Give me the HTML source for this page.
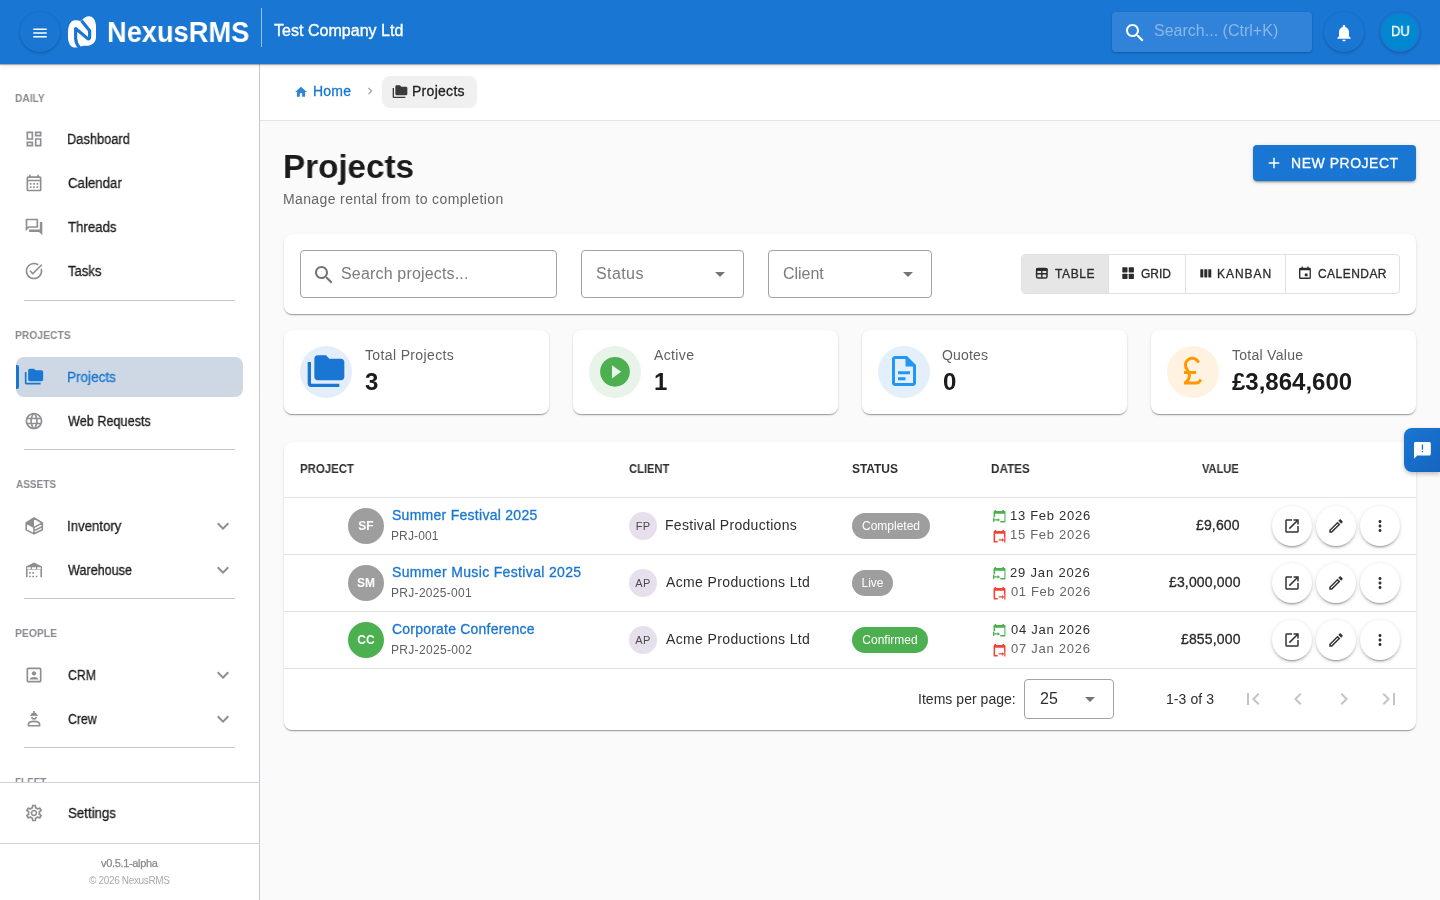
<!DOCTYPE html>
<html><head><meta charset="utf-8"><style>
*{box-sizing:border-box;margin:0;padding:0}
html,body{width:1440px;height:900px;overflow:hidden;background:#fafafa;font-family:"Liberation Sans",sans-serif;color:#1f1f1f}
.abs{position:absolute}
.t{position:absolute;line-height:1;white-space:nowrap;will-change:transform}
svg{display:block}
.card{position:absolute;background:#fff;border-radius:8px;box-shadow:0 2px 1px -1px rgba(0,0,0,.2),0 1px 1px 0 rgba(0,0,0,.14),0 1px 3px 0 rgba(0,0,0,.12)}
</style></head>
<body>
<div class="abs" style="left:0;top:0;width:1440px;height:64px;background:#1976d2;box-shadow:0 1px 1px rgba(0,0,0,.28),0 2px 4px rgba(0,0,0,.08);z-index:5">
<div class="abs" style="left:20px;top:12px;width:40px;height:40px;border-radius:50%;background:#1976d2;box-shadow:0 1px 3px rgba(0,0,0,.25)"></div>
<svg class="abs" style="left:31px;top:23.5px;fill:#fff;color:#fff;" width="18" height="18" viewBox="0 0 24 24"><path d="M3 18h18v-2H3v2zm0-5h18v-2H3v2zm0-7v2h18V6H3z"/></svg>
<svg class="abs" style="left:64px;top:12px" width="40" height="40" viewBox="0 0 900 900">
    <path fill="#fff" d="M90,470 C90,280 160,185 250,185 C320,185 360,215 400,190 C450,120 500,95 560,95 C660,95 720,200 720,330 L720,560 C720,690 620,760 500,760 C440,760 400,770 350,780 C320,795 290,800 260,800 C150,800 90,700 90,560 Z"/>
    <path fill="none" stroke="#1976d2" stroke-width="72" stroke-linejoin="round" d="M345,800 Q265,700 262,590 L262,372 L540,605 Q575,600 577,560 L577,420 L395,195"/>
    </svg>
<div class="t" id="k0" style="left:106.55px;top:16.61px;font-size:30px;color:#fff;font-weight:700;transform:scaleX(0.9079);transform-origin:0 0;">NexusRMS</div>
<div class="abs" style="left:260.5px;top:8px;width:1.5px;height:39px;background:rgba(255,255,255,.55)"></div>
<div class="t" id="k1" style="left:274.20px;top:23.46px;font-size:16px;color:#fff;letter-spacing:0.028px;-webkit-text-stroke:0.35px #fff;">Test Company Ltd</div>
<div class="abs" style="left:1112px;top:12px;width:200px;height:40px;border-radius:4px;background:#3083d8;box-shadow:0 1px 2px rgba(0,0,0,.25)"></div>
<svg class="abs" style="left:1123px;top:21px;fill:#fff;color:#fff;" width="24" height="24" viewBox="0 0 24 24"><path d="M15.5 14h-.79l-.28-.27C15.41 12.59 16 11.11 16 9.5 16 5.91 13.09 3 9.5 3S3 5.91 3 9.5 5.91 16 9.5 16c1.61 0 3.09-.59 4.23-1.57l.27.28v.79l5 4.99L20.49 19l-4.99-5zm-6 0C7.01 14 5 11.99 5 9.5S7.01 5 9.5 5 14 7.01 14 9.5 11.99 14 9.5 14z"/></svg>
<div class="t" id="k2" style="left:1153.50px;top:23.46px;font-size:16px;color:#8ab8e8;letter-spacing:0.011px;">Search... (Ctrl+K)</div>
<div class="abs" style="left:1324px;top:12px;width:40px;height:40px;border-radius:50%;background:#1976d2;box-shadow:0 1px 3px rgba(0,0,0,.25)"></div>
<svg class="abs" style="left:1333.7px;top:23.1px;fill:#fff;color:#fff;" width="20" height="20" viewBox="0 0 24 24"><path d="M12 22c1.1 0 2-.9 2-2h-4c0 1.1.89 2 2 2zm6-6v-5c0-3.07-1.64-5.64-4.5-6.32V4c0-.83-.67-1.5-1.5-1.5s-1.5.67-1.5 1.5v.68C7.63 5.36 6 7.92 6 11v5l-2 2v1h16v-1l-2-2z"/></svg>
<div class="abs" style="left:1380px;top:12px;width:40px;height:40px;border-radius:50%;background:#1976d2;box-shadow:0 1px 3px rgba(0,0,0,.25)"></div>
<div class="abs" style="left:1382px;top:14px;width:36px;height:36px;border-radius:50%;background:#0288d1"></div>
<div class="t" id="k3" style="left:1390.50px;top:24.15px;font-size:14px;color:#fff;transform:scaleX(0.9320);transform-origin:0 0;-webkit-text-stroke:0.3px #fff;">DU</div>
</div>
<div class="abs" style="left:0px;top:64px;width:260px;height:836px;background:#fff;border-right:1px solid #cac4d0;z-index:2;overflow:hidden"></div>
<div class="abs" style="left:0;top:0;width:259px;height:900px;z-index:3;overflow:hidden">
<div class="t" id="k4" style="left:15.28px;top:92.69px;font-size:11px;color:#8b8a90;font-weight:700;transform:scaleX(0.9223);transform-origin:0 0;">DAILY</div>
<svg class="abs" style="left:24px;top:129px;fill:#8e8e93;color:#8e8e93;" width="20" height="20" viewBox="0 0 24 24"><path d="M19 5v2h-4V5h4M9 5v6H5V5h4m10 8v6h-4v-6h4M9 17v2H5v-2h4M21 3h-8v6h8V3zM11 3H3v10h8V3zm10 8h-8v10h8V11zm-10 4H3v6h8v-6z"/></svg>
<div class="t" id="k5" style="left:67.35px;top:132.15px;font-size:14px;color:#1c1c1c;transform:scaleX(0.9173);transform-origin:0 0;-webkit-text-stroke:0.3px #1c1c1c;">Dashboard</div>
<svg class="abs" style="left:24px;top:173px;fill:#8e8e93;color:#8e8e93;" width="20" height="20" viewBox="0 0 24 24"><path d="M19 4h-1V2h-2v2H8V2H6v2H5c-1.11 0-1.99.9-1.99 2L3 20c0 1.1.89 2 2 2h14c1.1 0 2-.9 2-2V6c0-1.1-.9-2-2-2zm0 16H5V10h14v10zm0-12H5V6h14v2zM9 14H7v-2h2v2zm4 0h-2v-2h2v2zm4 0h-2v-2h2v2zm-8 4H7v-2h2v2zm4 0h-2v-2h2v2zm4 0h-2v-2h2v2z"/></svg>
<div class="t" id="k6" style="left:68.35px;top:176.15px;font-size:14px;color:#1c1c1c;transform:scaleX(0.9473);transform-origin:0 0;-webkit-text-stroke:0.3px #1c1c1c;">Calendar</div>
<svg class="abs" style="left:24px;top:217px;fill:#8e8e93;color:#8e8e93;" width="20" height="20" viewBox="0 0 24 24"><path d="M15 4v7H5.17L4 12.17V4h11m1-2H3c-.55 0-1 .45-1 1v14l4-4h10c.55 0 1-.45 1-1V3c0-.55-.45-1-1-1zm5 4h-2v9H6v2c0 .55.45 1 1 1h11l4 4V7c0-.55-.45-1-1-1z"/></svg>
<div class="t" id="k7" style="left:68.35px;top:220.15px;font-size:14px;color:#1c1c1c;transform:scaleX(0.9460);transform-origin:0 0;-webkit-text-stroke:0.3px #1c1c1c;">Threads</div>
<svg class="abs" style="left:24px;top:261px;fill:#8e8e93;color:#8e8e93;" width="20" height="20" viewBox="0 0 24 24"><path d="M22 5.18L10.59 16.6l-4.24-4.24 1.41-1.41 2.83 2.83 10-10L22 5.18zm-2.21 5.04c.13.57.21 1.17.21 1.78 0 4.42-3.58 8-8 8s-8-3.58-8-8 3.58-8 8-8c1.58 0 3.04.46 4.28 1.25l1.44-1.44C16.1 2.67 14.13 2 12 2 6.48 2 2 6.48 2 12s4.48 10 10 10 10-4.48 10-10c0-1.19-.22-2.33-.6-3.39l-1.61 1.61z"/></svg>
<div class="t" id="k8" style="left:68.35px;top:264.15px;font-size:14px;color:#1c1c1c;transform:scaleX(0.9355);transform-origin:0 0;-webkit-text-stroke:0.3px #1c1c1c;">Tasks</div>
<div class="abs" style="left:24px;top:300px;width:211px;height:1px;background:#c4c4c4"></div>
<div class="t" id="k9" style="left:15.28px;top:330.09px;font-size:11px;color:#8b8a90;font-weight:700;transform:scaleX(0.9389);transform-origin:0 0;">PROJECTS</div>
<div class="abs" style="left:16px;top:357px;width:227px;height:40px;border-radius:8px;background:#cdd8e4"></div>
<div class="abs" style="left:16px;top:365px;width:3px;height:24px;border-radius:0 2px 2px 0;background:#1976d2"></div>
<svg class="abs" style="left:24px;top:366.5px;fill:#1976d2;color:#1976d2;" width="20" height="20" viewBox="0 0 24 24"><path d="M3 6H1v13c0 1.1.9 2 2 2h17v-2H3V6z"/><path d="M21 4h-7l-2-2H7c-1.1 0-1.99.9-1.99 2L5 15c0 1.1.9 2 2 2h14c1.1 0 2-.9 2-2V6c0-1.1-.9-2-2-2z"/></svg>
<div class="t" id="k10" style="left:67.35px;top:369.65px;font-size:14px;color:#1976d2;transform:scaleX(0.9667);transform-origin:0 0;-webkit-text-stroke:0.3px #1976d2;">Projects</div>
<svg class="abs" style="left:24px;top:410.5px;fill:#8e8e93;color:#8e8e93;" width="20" height="20" viewBox="0 0 24 24"><path d="M11.99 2C6.47 2 2 6.48 2 12s4.47 10 9.99 10C17.52 22 22 17.52 22 12S17.52 2 11.99 2zm6.93 6h-2.95c-.32-1.25-.78-2.45-1.38-3.56 1.84.63 3.37 1.91 4.33 3.56zM12 4.04c.83 1.2 1.48 2.53 1.91 3.96h-3.82c.43-1.43 1.08-2.76 1.91-3.96zM4.26 14C4.1 13.36 4 12.69 4 12s.1-1.36.26-2h3.38c-.08.66-.14 1.32-.14 2 0 .68.06 1.34.14 2H4.26zm.82 2h2.95c.32 1.25.78 2.45 1.38 3.56-1.84-.63-3.37-1.9-4.33-3.56zm2.95-8H5.08c.96-1.66 2.49-2.93 4.33-3.56C8.81 5.55 8.35 6.75 8.03 8zM12 19.96c-.83-1.2-1.48-2.53-1.91-3.96h3.82c-.43 1.43-1.08 2.76-1.91 3.96zM14.34 14H9.66c-.09-.66-.16-1.32-.16-2 0-.68.07-1.35.16-2h4.68c.09.65.16 1.32.16 2 0 .68-.07 1.34-.16 2zm.25 5.56c.6-1.11 1.06-2.31 1.38-3.56h2.95c-.96 1.65-2.49 2.93-4.33 3.56zM16.36 14c.08-.66.14-1.32.14-2 0-.68-.06-1.34-.14-2h3.38c.16.64.26 1.31.26 2s-.1 1.36-.26 2h-3.38z"/></svg>
<div class="t" id="k11" style="left:68.44px;top:413.65px;font-size:14px;color:#1c1c1c;transform:scaleX(0.9042);transform-origin:0 0;-webkit-text-stroke:0.3px #1c1c1c;">Web Requests</div>
<div class="abs" style="left:24px;top:449px;width:211px;height:1px;background:#c4c4c4"></div>
<div class="t" id="k12" style="left:16.10px;top:478.69px;font-size:11px;color:#8b8a90;font-weight:700;transform:scaleX(0.9091);transform-origin:0 0;">ASSETS</div>
<svg class="abs" style="left:24px;top:515.5px;fill:#8e8e93;color:#8e8e93;" width="20" height="20" viewBox="0 0 24 24"><path fill="none" stroke="currentColor" stroke-width="1.9" stroke-linejoin="round" d="M12 2.4L22 8.4V16.6L12 21.4L2.6 16.6V8.4Z M2.8 8.6L12 13.6L21.8 8.6 M12 13.6V21.2 M13.2 17.2L21.6 12.8"/><path d="M12 2.2L2.6 8.4L12 13.6Z"/></svg>
<div class="t" id="k13" style="left:67.35px;top:518.65px;font-size:14px;color:#1c1c1c;transform:scaleX(0.9421);transform-origin:0 0;-webkit-text-stroke:0.3px #1c1c1c;">Inventory</div>
<svg class="abs" style="left:211px;top:513.5px;fill:#8e8e93;color:#8e8e93;" width="24" height="24" viewBox="0 0 24 24"><path d="M16.59 8.59L12 13.17 7.41 8.59 6 10l6 6 6-6z"/></svg>
<svg class="abs" style="left:24px;top:559.5px;fill:#8e8e93;color:#8e8e93;" width="20" height="20" viewBox="0 0 24 24"><path fill-rule="evenodd" d="M2.4 7.8L12 3L21.6 7.8V11.6H2.4Z M3.9 8.8h4.3v2.2H3.9z M9.7 8.8h4.6v2.2H9.7z M15.8 8.8h4.3v2.2h-4.3z"/><path d="M2.4 11h1.9v9.8H2.4z M19.7 11h1.9v9.8h-1.9z M6.2 14.5h2v2h-2z M10 14.5h2v2h-2z M6.2 18.8h2v2h-2z M10 18.8h2v2h-2z M14.2 18.8h1.8v2h-1.8z"/></svg>
<div class="t" id="k14" style="left:68.44px;top:562.65px;font-size:14px;color:#1c1c1c;transform:scaleX(0.8995);transform-origin:0 0;-webkit-text-stroke:0.3px #1c1c1c;">Warehouse</div>
<svg class="abs" style="left:211px;top:557.5px;fill:#8e8e93;color:#8e8e93;" width="24" height="24" viewBox="0 0 24 24"><path d="M16.59 8.59L12 13.17 7.41 8.59 6 10l6 6 6-6z"/></svg>
<div class="abs" style="left:24px;top:598px;width:211px;height:1px;background:#c4c4c4"></div>
<div class="t" id="k15" style="left:15.28px;top:628.19px;font-size:11px;color:#8b8a90;font-weight:700;transform:scaleX(0.9413);transform-origin:0 0;">PEOPLE</div>
<svg class="abs" style="left:24px;top:664.5px;fill:#8e8e93;color:#8e8e93;" width="20" height="20" viewBox="0 0 24 24"><path d="M19 5v14H5V5h14m0-2H5c-1.11 0-2 .9-2 2v14c0 1.1.89 2 2 2h14c1.1 0 2-.9 2-2V5c0-1.1-.9-2-2-2z"/><circle cx="12" cy="10" r="2.6"/><path d="M6.5 17.5c.6-2 3-3 5.5-3s4.9 1 5.5 3z"/></svg>
<div class="t" id="k16" style="left:68.35px;top:667.65px;font-size:14px;color:#1c1c1c;transform:scaleX(0.8798);transform-origin:0 0;-webkit-text-stroke:0.3px #1c1c1c;">CRM</div>
<svg class="abs" style="left:211px;top:662.5px;fill:#8e8e93;color:#8e8e93;" width="24" height="24" viewBox="0 0 24 24"><path d="M16.59 8.59L12 13.17 7.41 8.59 6 10l6 6 6-6z"/></svg>
<svg class="abs" style="left:24px;top:708.5px;fill:#8e8e93;color:#8e8e93;" width="20" height="20" viewBox="0 0 24 24"><path d="M11 2.3h2v2.3c1.8.4 2.9 1.6 2.9 3.1H8.1c0-1.5 1.1-2.7 2.9-3.1z"/><rect x="7.2" y="6.8" width="9.6" height="1.4" rx=".5"/><path fill="none" stroke="currentColor" stroke-width="1.8" d="M9.4 9.3a2.6 2.6 0 0 0 5.2 0"/><path fill="none" stroke="currentColor" stroke-width="2" stroke-linejoin="round" d="M5.3 20.1v-1.4c0-2.6 3.4-3.9 6.7-3.9s6.7 1.3 6.7 3.9v1.4z"/></svg>
<div class="t" id="k17" style="left:68.35px;top:711.65px;font-size:14px;color:#1c1c1c;transform:scaleX(0.8804);transform-origin:0 0;-webkit-text-stroke:0.3px #1c1c1c;">Crew</div>
<svg class="abs" style="left:211px;top:706.5px;fill:#8e8e93;color:#8e8e93;" width="24" height="24" viewBox="0 0 24 24"><path d="M16.59 8.59L12 13.17 7.41 8.59 6 10l6 6 6-6z"/></svg>
<div class="abs" style="left:24px;top:747px;width:211px;height:1px;background:#c4c4c4"></div>
<div class="t" id="k18" style="left:15.28px;top:777.19px;font-size:11px;color:#8b8a90;font-weight:700;transform:scaleX(0.9021);transform-origin:0 0;">FLEET</div>
<div class="abs" style="left:0px;top:782px;width:259px;height:118px;background:#fff;border-top:1px solid #d4cedb"></div>
<svg class="abs" style="left:24px;top:802.6px;fill:#8e8e93;color:#8e8e93;" width="20" height="20" viewBox="0 0 24 24"><path d="M19.43 12.98c.04-.32.07-.64.07-.98 0-.34-.03-.66-.07-.98l2.11-1.65c.19-.15.24-.42.12-.64l-2-3.46c-.09-.16-.26-.25-.44-.25-.06 0-.12.01-.17.03l-2.49 1c-.52-.4-1.08-.73-1.69-.98l-.38-2.65C14.46 2.18 14.25 2 14 2h-4c-.25 0-.46.18-.49.42l-.38 2.65c-.61.25-1.17.59-1.69.98l-2.49-1c-.06-.02-.12-.03-.18-.03-.17 0-.34.09-.43.25l-2 3.46c-.13.22-.07.49.12.64l2.11 1.65c-.04.32-.07.65-.07.98 0 .33.03.66.07.98l-2.11 1.65c-.19.15-.24.42-.12.64l2 3.46c.09.16.26.25.44.25.06 0 .12-.01.17-.03l2.49-1c.52.4 1.08.73 1.69.98l.38 2.65c.03.24.24.42.49.42h4c.25 0 .46-.18.49-.42l.38-2.65c.61-.25 1.17-.59 1.69-.98l2.49 1c.06.02.12.03.18.03.17 0 .34-.09.43-.25l2-3.46c.12-.22.07-.49-.12-.64l-2.11-1.65zm-1.98-1.71c.04.31.05.52.05.73 0 .21-.02.43-.05.73l-.14 1.13.89.7 1.08.84-.7 1.21-1.27-.51-1.04-.42-.9.68c-.43.32-.84.56-1.25.73l-1.06.43-.16 1.13-.2 1.35h-1.4l-.19-1.35-.16-1.13-1.06-.43c-.43-.18-.83-.41-1.23-.71l-.91-.7-1.06.43-1.27.51-.7-1.21 1.08-.84.89-.7-.14-1.13c-.03-.31-.05-.54-.05-.74s.02-.43.05-.73l.14-1.13-.89-.7-1.08-.84.7-1.21 1.27.51 1.04.42.9-.68c.43-.32.84-.56 1.25-.73l1.06-.43.16-1.13.2-1.35h1.39l.19 1.35.16 1.13 1.06.43c.43.18.83.41 1.23.71l.91.7 1.06-.43 1.27-.51.7 1.21-1.07.85-.89.7.14 1.13zM12 8c-2.21 0-4 1.79-4 4s1.79 4 4 4 4-1.79 4-4-1.79-4-4-4zm0 6c-1.1 0-2-.9-2-2s.9-2 2-2 2 .9 2 2-.9 2-2 2z"/></svg>
<div class="t" id="k19" style="left:67.89px;top:805.75px;font-size:14px;color:#1c1c1c;transform:scaleX(0.9477);transform-origin:0 0;-webkit-text-stroke:0.3px #1c1c1c;">Settings</div>
<div class="abs" style="left:0px;top:843px;width:259px;height:1px;background:#d4cedb"></div>
<div class="t" id="k20" style="left:101.11px;top:857.69px;font-size:11px;color:#8a8a8a;letter-spacing:-0.337px;-webkit-text-stroke:0.25px #8a8a8a;">v0.5.1-alpha</div>
<div class="t" id="k21" style="left:89.00px;top:875.53px;font-size:10px;color:#ababab;letter-spacing:-0.339px;">© 2026 NexusRMS</div>
</div>
<div class="abs" style="left:260px;top:64px;width:1180px;height:57px;background:#fff;border-bottom:1px solid #e3e3e3"></div>
<svg class="abs" style="left:293.8px;top:85px;fill:#2f84d6;color:#2f84d6;" width="14" height="14" viewBox="0 0 24 24"><path d="M10 20v-6h4v6h5v-8h3L12 3 2 12h3v8z"/></svg>
<div class="t" id="k22" style="left:313.00px;top:83.95px;font-size:14px;color:#1976d2;letter-spacing:0.217px;-webkit-text-stroke:0.3px #1976d2;">Home</div>
<svg class="abs" style="left:363px;top:84px;fill:#9e9e9e;color:#9e9e9e;" width="14" height="14" viewBox="0 0 24 24"><path d="M10 6L8.59 7.41 13.17 12l-4.58 4.59L10 18l6-6z"/></svg>
<div class="abs" style="left:382px;top:76px;width:95px;height:32px;border-radius:8px;background:#f0f0f0"></div>
<svg class="abs" style="left:392.3px;top:84.3px;fill:#3a3a3a;color:#3a3a3a;" width="16" height="16" viewBox="0 0 24 24"><path d="M3 6H1v13c0 1.1.9 2 2 2h17v-2H3V6z"/><path d="M21 4h-7l-2-2H7c-1.1 0-1.99.9-1.99 2L5 15c0 1.1.9 2 2 2h14c1.1 0 2-.9 2-2V6c0-1.1-.9-2-2-2z"/></svg>
<div class="t" id="k23" style="left:412.35px;top:84.15px;font-size:14px;color:#1f1f1f;letter-spacing:0.284px;-webkit-text-stroke:0.3px #1f1f1f;">Projects</div>
<div class="t" id="k24" style="left:283.19px;top:148.52px;font-size:34px;color:#1b1b1b;font-weight:700;transform:scaleX(0.9764);transform-origin:0 0;">Projects</div>
<div class="t" id="k25" style="left:283.20px;top:192.15px;font-size:14px;color:#666;letter-spacing:0.375px;">Manage rental from to completion</div>
<div class="abs" style="left:1253px;top:145px;width:163px;height:36px;border-radius:4px;background:#1976d2;box-shadow:0 3px 1px -2px rgba(0,0,0,.2),0 2px 2px 0 rgba(0,0,0,.14),0 1px 5px 0 rgba(0,0,0,.12)"></div>
<svg class="abs" style="left:1264.75px;top:154.2px;fill:#fff;color:#fff;" width="18" height="18" viewBox="0 0 24 24"><path d="M19 13h-6v6h-2v-6H5v-2h6V5h2v6h6v2z"/></svg>
<div class="t" id="k26" style="left:1291.25px;top:156.45px;font-size:14px;color:#fff;letter-spacing:0.522px;-webkit-text-stroke:0.3px #fff;">NEW PROJECT</div>
<div class="card" style="left:284px;top:234px;width:1132px;height:80px"></div>
<div class="abs" style="left:300px;top:250px;width:257px;height:48px;border:1px solid #a3a3a3;border-radius:4px"></div>
<svg class="abs" style="left:311.6px;top:262.6px;fill:#757575;color:#757575;" width="24" height="24" viewBox="0 0 24 24"><path d="M15.5 14h-.79l-.28-.27C15.41 12.59 16 11.11 16 9.5 16 5.91 13.09 3 9.5 3S3 5.91 3 9.5 5.91 16 9.5 16c1.61 0 3.09-.59 4.23-1.57l.27.28v.79l5 4.99L20.49 19l-4.99-5zm-6 0C7.01 14 5 11.99 5 9.5S7.01 5 9.5 5 14 7.01 14 9.5 11.99 14 9.5 14z"/></svg>
<div class="t" id="k27" style="left:341.35px;top:265.66px;font-size:16px;color:#7b7b7b;letter-spacing:0.172px;">Search projects...</div>
<div class="abs" style="left:581px;top:250px;width:163px;height:48px;border:1px solid #a3a3a3;border-radius:4px"></div>
<div class="t" id="k28" style="left:596.35px;top:265.66px;font-size:16px;color:#7b7b7b;letter-spacing:0.408px;">Status</div>
<div class="abs" style="left:715px;top:272px;width:0px;height:0px;border-left:5px solid transparent;border-right:5px solid transparent;border-top:5px solid #757575"></div>
<div class="abs" style="left:768px;top:250px;width:164px;height:48px;border:1px solid #a3a3a3;border-radius:4px"></div>
<div class="t" id="k29" style="left:783.14px;top:265.66px;font-size:16px;color:#7b7b7b;letter-spacing:-0.033px;">Client</div>
<div class="abs" style="left:903px;top:272px;width:0px;height:0px;border-left:5px solid transparent;border-right:5px solid transparent;border-top:5px solid #757575"></div>
<div class="abs" style="left:1021px;top:254px;width:379px;height:40px;border:1px solid #e0e0e0;border-radius:4px;overflow:hidden"></div>
<div class="abs" style="left:1022px;top:255px;width:86px;height:38px;background:#e6e6e6;border-radius:3px 0 0 3px"></div>
<div class="abs" style="left:1108px;top:255px;width:1px;height:38px;background:#e0e0e0"></div>
<div class="abs" style="left:1184.5px;top:255px;width:1px;height:38px;background:#e0e0e0"></div>
<div class="abs" style="left:1284.5px;top:255px;width:1px;height:38px;background:#e0e0e0"></div>
<svg class="abs" style="left:1035px;top:267px;fill:#2b2b2b" width="14" height="14" viewBox="0 0 14 14"><rect x="1.6" y="1.6" width="10.4" height="9.4" rx="1.6" fill="none" stroke="#2b2b2b" stroke-width="1.5"/><rect x="1" y="1" width="11.6" height="3" rx="1.2"/><path d="M1.5 6.1h10.6v1.4H1.5zM6.1 3h1.4v7.6H6.1z"/></svg>
<div class="t" id="k30" style="left:1055.00px;top:267.94px;font-size:12px;color:#2b2b2b;letter-spacing:0.605px;-webkit-text-stroke:0.3px #2b2b2b;">TABLE</div>
<svg class="abs" style="left:1122px;top:267px;fill:#2b2b2b" width="12" height="12" viewBox="0 0 12 12"><rect x="0.3" y="0.2" width="5.2" height="5.2" rx=".6"/><rect x="6.7" y="0.2" width="5.2" height="5.2" rx=".6"/><rect x="0.3" y="6.7" width="5.2" height="5.2" rx=".6"/><rect x="6.7" y="6.7" width="5.2" height="5.2" rx=".6"/></svg>
<div class="t" id="k31" style="left:1141.00px;top:267.94px;font-size:12px;color:#2b2b2b;-webkit-text-stroke:0.3px #2b2b2b;">GRID</div>
<svg class="abs" style="left:1199.5px;top:268.5px;fill:#2b2b2b" width="12" height="12" viewBox="0 0 12 12"><rect x="0.3" y="0.2" width="3" height="8.2" rx=".4"/><rect x="4.3" y="0.2" width="3" height="8.2" rx=".4"/><rect x="8.3" y="0.2" width="3" height="8.2" rx=".4"/></svg>
<div class="t" id="k32" style="left:1216.79px;top:267.94px;font-size:12px;color:#2b2b2b;letter-spacing:0.955px;-webkit-text-stroke:0.3px #2b2b2b;">KANBAN</div>
<svg class="abs" style="left:1299px;top:265.5px;fill:#2b2b2b" width="13" height="13" viewBox="0 0 13 13"><path d="M2.6 0.5h1.3v1.2h4.4V0.5h1.3v1.2h.9c.9 0 1.4.6 1.4 1.4v8.5c0 .8-.6 1.4-1.4 1.4H1.4C.6 13 0 12.4 0 11.6V3.1c0-.8.6-1.4 1.4-1.4h1.2z M1.4 4.3v7.3h9.2V4.3z"/><rect x="5.8" y="7.5" width="2.8" height="2.8" rx=".3"/></svg>
<div class="t" id="k33" style="left:1317.90px;top:267.94px;font-size:12px;color:#2b2b2b;letter-spacing:0.451px;-webkit-text-stroke:0.3px #2b2b2b;">CALENDAR</div>
<div class="card" style="left:284px;top:330px;width:265px;height:84px"></div>
<div class="abs" style="left:300px;top:346px;width:52px;height:52px;border-radius:50%;background:#e3eefa"></div>
<div class="t" id="k34" style="left:364.80px;top:348.15px;font-size:14px;color:#5f5f5f;letter-spacing:0.364px;">Total Projects</div>
<div class="t" id="k35" style="left:364.60px;top:370.08px;font-size:24px;color:#1b1b1b;font-weight:700;">3</div>
<div class="card" style="left:573px;top:330px;width:265px;height:84px"></div>
<div class="abs" style="left:589px;top:346px;width:52px;height:52px;border-radius:50%;background:#e8f4e9"></div>
<div class="t" id="k36" style="left:653.80px;top:348.15px;font-size:14px;color:#5f5f5f;letter-spacing:0.380px;">Active</div>
<div class="t" id="k37" style="left:653.60px;top:370.08px;font-size:24px;color:#1b1b1b;font-weight:700;">1</div>
<div class="card" style="left:862px;top:330px;width:265px;height:84px"></div>
<div class="abs" style="left:878px;top:346px;width:52px;height:52px;border-radius:50%;background:#e3f0fc"></div>
<div class="t" id="k38" style="left:942.14px;top:348.15px;font-size:14px;color:#5f5f5f;letter-spacing:0.160px;">Quotes</div>
<div class="t" id="k39" style="left:942.60px;top:370.08px;font-size:24px;color:#1b1b1b;font-weight:700;">0</div>
<div class="card" style="left:1151px;top:330px;width:265px;height:84px"></div>
<div class="abs" style="left:1167px;top:346px;width:52px;height:52px;border-radius:50%;background:#fff2e1"></div>
<div class="t" id="k40" style="left:1231.80px;top:348.15px;font-size:14px;color:#5f5f5f;letter-spacing:0.275px;">Total Value</div>
<div class="t" id="k41" style="left:1231.60px;top:370.08px;font-size:24px;color:#1b1b1b;font-weight:700;">&#163;3,864,600</div>
<svg class="abs" style="left:306px;top:352px;fill:#1976d2;color:#1976d2;" width="40" height="40" viewBox="0 0 24 24"><path d="M3 6H1v13c0 1.1.9 2 2 2h17v-2H3V6z"/><path d="M21 4h-7l-2-2H7c-1.1 0-1.99.9-1.99 2L5 15c0 1.1.9 2 2 2h14c1.1 0 2-.9 2-2V6c0-1.1-.9-2-2-2z"/></svg>
<svg class="abs" style="left:600px;top:356.5px;" width="30" height="30" viewBox="0 0 30 30"><circle cx="15" cy="14.85" r="14.85" fill="#4caf50"/><path d="M12 8.2v13.2l9.2-6.6z" fill="#e8f4e9"/></svg>
<svg class="abs" style="left:886px;top:353.3px;fill:#2196f3" width="36" height="36" viewBox="0 0 24 24"><path d="M14 2H6c-1.1 0-2 .9-2 2v16c0 1.1.9 2 2 2h12c1.1 0 2-.9 2-2V8l-6-6zm4 18H6V4h7v5h5v11z"/><path d="M8 12.2h8v2H8zM8 16.2h5v2H8z"/></svg>
<svg class="abs" style="left:1175px;top:353.3px;fill:#ff9800;color:#ff9800;" width="36" height="36" viewBox="0 0 24 24"><path d="M14 21c1.93 0 3.62-1.17 4-3l-1.75-.88C16 18.21 15.33 19 14 19H9.1c.83-1 1.5-2.34 1.5-4 0-.35-.03-.69-.08-1H14v-2H9.82C9 10.42 8 9.6 8 8c0-1.93 1.57-3.5 3.5-3.5 1.5 0 2.79.95 3.28 2.28L16.63 6c-.8-2.05-2.79-3.5-5.13-3.5C8.46 2.5 6 4.96 6 8c0 1.78.79 2.9 1.49 4H6v2h2.47c.08.31.13.64.13 1 0 2.7-2.6 4-2.6 4v2h8z"/></svg>
<div class="card" style="left:284px;top:442px;width:1132px;height:288px"></div>
<div class="t" id="k42" style="left:300.27px;top:463.14px;font-size:12px;color:#2e2e2e;font-weight:700;transform:scaleX(0.9514);transform-origin:0 0;">PROJECT</div>
<div class="t" id="k43" style="left:629.35px;top:463.14px;font-size:12px;color:#2e2e2e;font-weight:700;transform:scaleX(0.9320);transform-origin:0 0;">CLIENT</div>
<div class="t" id="k44" style="left:851.56px;top:463.14px;font-size:12px;color:#2e2e2e;font-weight:700;letter-spacing:-0.049px;">STATUS</div>
<div class="t" id="k45" style="left:990.92px;top:463.14px;font-size:12px;color:#2e2e2e;font-weight:700;transform:scaleX(0.9747);transform-origin:0 0;">DATES</div>
<div class="t" id="k46" style="left:1202.25px;top:463.14px;font-size:12px;color:#2e2e2e;font-weight:700;transform:scaleX(0.9236);transform-origin:0 0;">VALUE</div>
<div class="abs" style="left:284px;top:497px;width:1132px;height:1px;background:#e3e3e3"></div>
<div class="abs" style="left:284px;top:554px;width:1132px;height:1px;background:#e3e3e3"></div>
<div class="abs" style="left:284px;top:611px;width:1132px;height:1px;background:#e3e3e3"></div>
<div class="abs" style="left:284px;top:668px;width:1132px;height:1px;background:#e3e3e3"></div>
<div class="abs" style="left:348px;top:508px;width:36px;height:36px;border-radius:50%;background:#9e9e9e"></div>
<div class="t" style="left:348px;top:508.0px;width:36px;text-align:center;font-size:12px;font-weight:700;color:#fff;line-height:36px">SF</div>
<div class="t" id="k47" style="left:391.64px;top:508.15px;font-size:14px;color:#1976d2;letter-spacing:0.274px;-webkit-text-stroke:0.3px #1976d2;">Summer Festival 2025</div>
<div class="t" id="k48" style="left:391.17px;top:530.24px;font-size:12px;color:#5f5f5f;letter-spacing:0.116px;">PRJ-001</div>
<div class="abs" style="left:629px;top:512px;width:28px;height:28px;border-radius:50%;background:#e7e0ec"></div>
<div class="t" style="left:629px;top:512.0px;width:28px;text-align:center;font-size:11px;color:#4a4a4a;line-height:28px;letter-spacing:.3px">FP</div>
<div class="t" id="k49" style="left:664.90px;top:518.15px;font-size:14px;color:#2e2e2e;letter-spacing:0.302px;">Festival Productions</div>
<div class="abs" style="left:852px;top:513px;width:78px;height:26px;border-radius:13px;background:#9e9e9e"></div>
<div class="t" style="left:852px;top:513.0px;width:78px;text-align:center;font-size:12px;color:#fff;line-height:26px">Completed</div>
<svg class="abs" style="left:992px;top:508.6px;fill:#4caf50" width="14.5" height="14.5" viewBox="0 0 14 14"><path d="M2.5 1h1.5v1h6V1h1.5v1h.5c.6 0 1 .4 1 1v9c0 .6-.4 1-1 1H8v-1.5h4V4.5H3v3.5H1.5V3c0-.6.4-1 1-1z"/><path d="M1 8.5h1.2v4H1zM2.2 9.9h3.3V8.6l2.2 1.9-2.2 1.9v-1.3H2.2z"/></svg>
<svg class="abs" style="left:992px;top:528.6px;fill:#f44336" width="14.5" height="14.5" viewBox="0 0 14 14"><path d="M2.5 1h1.5v1h6V1h1.5v1h.5c.6 0 1 .4 1 1v5.5h-1.5v-4H3v7h2.5V13H2.5c-.6 0-1-.4-1-1V3c0-.6.4-1 1-1z"/><path d="M11.8 8.5H13v4.5h-1.2zM6.5 10h3.3V8.7l2 1.9-2 1.9v-1.3H6.5z"/></svg>
<div class="t" id="k50" style="left:1009.87px;top:508.50px;font-size:13px;color:#2e2e2e;letter-spacing:0.712px;">13 Feb 2026</div>
<div class="t" id="k51" style="left:1009.87px;top:528.40px;font-size:13px;color:#666;letter-spacing:0.712px;">15 Feb 2026</div>
<div class="t" style="right:199.8px;top:518.45px;font-size:14px;color:#2a2a2a;letter-spacing:.15px;-webkit-text-stroke:0.3px #2a2a2a">&#163;9,600</div>
<div class="abs" style="left:1272px;top:506px;width:40px;height:40px;border-radius:50%;background:#fff;box-shadow:0 3px 1px -2px rgba(0,0,0,.2),0 2px 2px 0 rgba(0,0,0,.14),0 1px 5px 0 rgba(0,0,0,.12)"></div>
<svg class="abs" style="left:1283px;top:517px;fill:#333;color:#333;" width="18" height="18" viewBox="0 0 24 24"><path d="M19 19H5V5h7V3H5c-1.11 0-2 .9-2 2v14c0 1.1.89 2 2 2h14c1.1 0 2-.9 2-2v-7h-2v7zM14 3v2h3.59l-9.83 9.83 1.41 1.41L19 6.41V10h2V3h-7z"/></svg>
<div class="abs" style="left:1316px;top:506px;width:40px;height:40px;border-radius:50%;background:#fff;box-shadow:0 3px 1px -2px rgba(0,0,0,.2),0 2px 2px 0 rgba(0,0,0,.14),0 1px 5px 0 rgba(0,0,0,.12)"></div>
<svg class="abs" style="left:1327px;top:517px;fill:#333;color:#333;" width="18" height="18" viewBox="0 0 24 24"><path d="M3 17.25V21h3.75L17.81 9.94l-3.75-3.75L3 17.25zM5.92 19H5v-.92l9.06-9.06.92.92L5.92 19zM20.71 5.63l-2.34-2.34c-.2-.2-.45-.29-.71-.29s-.51.1-.7.29l-1.83 1.83 3.75 3.75 1.83-1.83c.39-.39.39-1.02 0-1.41z"/></svg>
<div class="abs" style="left:1360px;top:506px;width:40px;height:40px;border-radius:50%;background:#fff;box-shadow:0 3px 1px -2px rgba(0,0,0,.2),0 2px 2px 0 rgba(0,0,0,.14),0 1px 5px 0 rgba(0,0,0,.12)"></div>
<svg class="abs" style="left:1371px;top:517px;fill:#333;color:#333;" width="18" height="18" viewBox="0 0 24 24"><path d="M12 8c1.1 0 2-.9 2-2s-.9-2-2-2-2 .9-2 2 .9 2 2 2zm0 2c-1.1 0-2 .9-2 2s.9 2 2 2 2-.9 2-2-.9-2-2-2zm0 6c-1.1 0-2 .9-2 2s.9 2 2 2 2-.9 2-2-.9-2-2-2z"/></svg>
<div class="abs" style="left:348px;top:565px;width:36px;height:36px;border-radius:50%;background:#9e9e9e"></div>
<div class="t" style="left:348px;top:565.0px;width:36px;text-align:center;font-size:12px;font-weight:700;color:#fff;line-height:36px">SM</div>
<div class="t" id="k52" style="left:391.64px;top:565.15px;font-size:14px;color:#1976d2;letter-spacing:0.345px;-webkit-text-stroke:0.3px #1976d2;">Summer Music Festival 2025</div>
<div class="t" id="k53" style="left:391.17px;top:587.24px;font-size:12px;color:#5f5f5f;letter-spacing:0.306px;">PRJ-2025-001</div>
<div class="abs" style="left:629px;top:569px;width:28px;height:28px;border-radius:50%;background:#e7e0ec"></div>
<div class="t" style="left:629px;top:569.0px;width:28px;text-align:center;font-size:11px;color:#4a4a4a;line-height:28px;letter-spacing:.3px">AP</div>
<div class="t" id="k54" style="left:665.90px;top:575.15px;font-size:14px;color:#2e2e2e;letter-spacing:0.365px;">Acme Productions Ltd</div>
<div class="abs" style="left:852px;top:570px;width:41px;height:26px;border-radius:13px;background:#9e9e9e"></div>
<div class="t" style="left:852px;top:570.0px;width:41px;text-align:center;font-size:12px;color:#fff;line-height:26px">Live</div>
<svg class="abs" style="left:992px;top:565.6px;fill:#4caf50" width="14.5" height="14.5" viewBox="0 0 14 14"><path d="M2.5 1h1.5v1h6V1h1.5v1h.5c.6 0 1 .4 1 1v9c0 .6-.4 1-1 1H8v-1.5h4V4.5H3v3.5H1.5V3c0-.6.4-1 1-1z"/><path d="M1 8.5h1.2v4H1zM2.2 9.9h3.3V8.6l2.2 1.9-2.2 1.9v-1.3H2.2z"/></svg>
<svg class="abs" style="left:992px;top:585.6px;fill:#f44336" width="14.5" height="14.5" viewBox="0 0 14 14"><path d="M2.5 1h1.5v1h6V1h1.5v1h.5c.6 0 1 .4 1 1v5.5h-1.5v-4H3v7h2.5V13H2.5c-.6 0-1-.4-1-1V3c0-.6.4-1 1-1z"/><path d="M11.8 8.5H13v4.5h-1.2zM6.5 10h3.3V8.7l2 1.9-2 1.9v-1.3H6.5z"/></svg>
<div class="t" id="k55" style="left:1010.26px;top:565.50px;font-size:13px;color:#2e2e2e;letter-spacing:0.823px;">29 Jan 2026</div>
<div class="t" id="k56" style="left:1010.80px;top:585.40px;font-size:13px;color:#666;letter-spacing:0.619px;">01 Feb 2026</div>
<div class="t" style="right:199.8px;top:575.45px;font-size:14px;color:#2a2a2a;letter-spacing:.15px;-webkit-text-stroke:0.3px #2a2a2a">&#163;3,000,000</div>
<div class="abs" style="left:1272px;top:563px;width:40px;height:40px;border-radius:50%;background:#fff;box-shadow:0 3px 1px -2px rgba(0,0,0,.2),0 2px 2px 0 rgba(0,0,0,.14),0 1px 5px 0 rgba(0,0,0,.12)"></div>
<svg class="abs" style="left:1283px;top:574px;fill:#333;color:#333;" width="18" height="18" viewBox="0 0 24 24"><path d="M19 19H5V5h7V3H5c-1.11 0-2 .9-2 2v14c0 1.1.89 2 2 2h14c1.1 0 2-.9 2-2v-7h-2v7zM14 3v2h3.59l-9.83 9.83 1.41 1.41L19 6.41V10h2V3h-7z"/></svg>
<div class="abs" style="left:1316px;top:563px;width:40px;height:40px;border-radius:50%;background:#fff;box-shadow:0 3px 1px -2px rgba(0,0,0,.2),0 2px 2px 0 rgba(0,0,0,.14),0 1px 5px 0 rgba(0,0,0,.12)"></div>
<svg class="abs" style="left:1327px;top:574px;fill:#333;color:#333;" width="18" height="18" viewBox="0 0 24 24"><path d="M3 17.25V21h3.75L17.81 9.94l-3.75-3.75L3 17.25zM5.92 19H5v-.92l9.06-9.06.92.92L5.92 19zM20.71 5.63l-2.34-2.34c-.2-.2-.45-.29-.71-.29s-.51.1-.7.29l-1.83 1.83 3.75 3.75 1.83-1.83c.39-.39.39-1.02 0-1.41z"/></svg>
<div class="abs" style="left:1360px;top:563px;width:40px;height:40px;border-radius:50%;background:#fff;box-shadow:0 3px 1px -2px rgba(0,0,0,.2),0 2px 2px 0 rgba(0,0,0,.14),0 1px 5px 0 rgba(0,0,0,.12)"></div>
<svg class="abs" style="left:1371px;top:574px;fill:#333;color:#333;" width="18" height="18" viewBox="0 0 24 24"><path d="M12 8c1.1 0 2-.9 2-2s-.9-2-2-2-2 .9-2 2 .9 2 2 2zm0 2c-1.1 0-2 .9-2 2s.9 2 2 2 2-.9 2-2-.9-2-2-2zm0 6c-1.1 0-2 .9-2 2s.9 2 2 2 2-.9 2-2-.9-2-2-2z"/></svg>
<div class="abs" style="left:348px;top:622px;width:36px;height:36px;border-radius:50%;background:#4caf50"></div>
<div class="t" style="left:348px;top:622.0px;width:36px;text-align:center;font-size:12px;font-weight:700;color:#fff;line-height:36px">CC</div>
<div class="t" id="k57" style="left:392.10px;top:622.15px;font-size:14px;color:#1976d2;letter-spacing:0.215px;-webkit-text-stroke:0.3px #1976d2;">Corporate Conference</div>
<div class="t" id="k58" style="left:391.17px;top:644.24px;font-size:12px;color:#5f5f5f;letter-spacing:0.317px;">PRJ-2025-002</div>
<div class="abs" style="left:629px;top:626px;width:28px;height:28px;border-radius:50%;background:#e7e0ec"></div>
<div class="t" style="left:629px;top:626.0px;width:28px;text-align:center;font-size:11px;color:#4a4a4a;line-height:28px;letter-spacing:.3px">AP</div>
<div class="t" id="k59" style="left:665.90px;top:632.15px;font-size:14px;color:#2e2e2e;letter-spacing:0.365px;">Acme Productions Ltd</div>
<div class="abs" style="left:852px;top:627px;width:76px;height:26px;border-radius:13px;background:#4caf50"></div>
<div class="t" style="left:852px;top:627.0px;width:76px;text-align:center;font-size:12px;color:#fff;line-height:26px">Confirmed</div>
<svg class="abs" style="left:992px;top:622.6px;fill:#4caf50" width="14.5" height="14.5" viewBox="0 0 14 14"><path d="M2.5 1h1.5v1h6V1h1.5v1h.5c.6 0 1 .4 1 1v9c0 .6-.4 1-1 1H8v-1.5h4V4.5H3v3.5H1.5V3c0-.6.4-1 1-1z"/><path d="M1 8.5h1.2v4H1zM2.2 9.9h3.3V8.6l2.2 1.9-2.2 1.9v-1.3H2.2z"/></svg>
<svg class="abs" style="left:992px;top:642.6px;fill:#f44336" width="14.5" height="14.5" viewBox="0 0 14 14"><path d="M2.5 1h1.5v1h6V1h1.5v1h.5c.6 0 1 .4 1 1v5.5h-1.5v-4H3v7h2.5V13H2.5c-.6 0-1-.4-1-1V3c0-.6.4-1 1-1z"/><path d="M11.8 8.5H13v4.5h-1.2zM6.5 10h3.3V8.7l2 1.9-2 1.9v-1.3H6.5z"/></svg>
<div class="t" id="k60" style="left:1010.80px;top:622.50px;font-size:13px;color:#2e2e2e;letter-spacing:0.730px;">04 Jan 2026</div>
<div class="t" id="k61" style="left:1010.80px;top:642.40px;font-size:13px;color:#666;letter-spacing:0.730px;">07 Jan 2026</div>
<div class="t" style="right:199.8px;top:632.45px;font-size:14px;color:#2a2a2a;letter-spacing:.15px;-webkit-text-stroke:0.3px #2a2a2a">&#163;855,000</div>
<div class="abs" style="left:1272px;top:620px;width:40px;height:40px;border-radius:50%;background:#fff;box-shadow:0 3px 1px -2px rgba(0,0,0,.2),0 2px 2px 0 rgba(0,0,0,.14),0 1px 5px 0 rgba(0,0,0,.12)"></div>
<svg class="abs" style="left:1283px;top:631px;fill:#333;color:#333;" width="18" height="18" viewBox="0 0 24 24"><path d="M19 19H5V5h7V3H5c-1.11 0-2 .9-2 2v14c0 1.1.89 2 2 2h14c1.1 0 2-.9 2-2v-7h-2v7zM14 3v2h3.59l-9.83 9.83 1.41 1.41L19 6.41V10h2V3h-7z"/></svg>
<div class="abs" style="left:1316px;top:620px;width:40px;height:40px;border-radius:50%;background:#fff;box-shadow:0 3px 1px -2px rgba(0,0,0,.2),0 2px 2px 0 rgba(0,0,0,.14),0 1px 5px 0 rgba(0,0,0,.12)"></div>
<svg class="abs" style="left:1327px;top:631px;fill:#333;color:#333;" width="18" height="18" viewBox="0 0 24 24"><path d="M3 17.25V21h3.75L17.81 9.94l-3.75-3.75L3 17.25zM5.92 19H5v-.92l9.06-9.06.92.92L5.92 19zM20.71 5.63l-2.34-2.34c-.2-.2-.45-.29-.71-.29s-.51.1-.7.29l-1.83 1.83 3.75 3.75 1.83-1.83c.39-.39.39-1.02 0-1.41z"/></svg>
<div class="abs" style="left:1360px;top:620px;width:40px;height:40px;border-radius:50%;background:#fff;box-shadow:0 3px 1px -2px rgba(0,0,0,.2),0 2px 2px 0 rgba(0,0,0,.14),0 1px 5px 0 rgba(0,0,0,.12)"></div>
<svg class="abs" style="left:1371px;top:631px;fill:#333;color:#333;" width="18" height="18" viewBox="0 0 24 24"><path d="M12 8c1.1 0 2-.9 2-2s-.9-2-2-2-2 .9-2 2 .9 2 2 2zm0 2c-1.1 0-2 .9-2 2s.9 2 2 2 2-.9 2-2-.9-2-2-2zm0 6c-1.1 0-2 .9-2 2s.9 2 2 2 2-.9 2-2-.9-2-2-2z"/></svg>
<div class="t" id="k62" style="left:918.35px;top:692.35px;font-size:14px;color:#2e2e2e;letter-spacing:0.034px;">Items per page:</div>
<div class="abs" style="left:1024px;top:679px;width:90px;height:40px;border:1px solid #a3a3a3;border-radius:4px"></div>
<div class="t" id="k63" style="left:1040.30px;top:691.26px;font-size:16px;color:#2e2e2e;">25</div>
<div class="abs" style="left:1085px;top:697px;width:0px;height:0px;border-left:5px solid transparent;border-right:5px solid transparent;border-top:5px solid #757575"></div>
<div class="t" id="k64" style="left:1166.00px;top:692.15px;font-size:14px;color:#2e2e2e;letter-spacing:0.081px;">1-3 of 3</div>
<svg class="abs" style="left:1240.5px;top:687px;fill:#c4c4c4;color:#c4c4c4;" width="24" height="24" viewBox="0 0 24 24"><path d="M18.41 16.59L13.82 12l4.59-4.59L17 6l-6 6 6 6zM6 6h2v12H6z"/></svg>
<svg class="abs" style="left:1286px;top:687px;fill:#c4c4c4;color:#c4c4c4;" width="24" height="24" viewBox="0 0 24 24"><path d="M15.41 7.41L14 6l-6 6 6 6 1.41-1.41L10.83 12z"/></svg>
<svg class="abs" style="left:1331.5px;top:687px;fill:#c4c4c4;color:#c4c4c4;" width="24" height="24" viewBox="0 0 24 24"><path d="M10 6L8.59 7.41 13.17 12l-4.58 4.59L10 18l6-6z"/></svg>
<svg class="abs" style="left:1377px;top:687px;fill:#c4c4c4;color:#c4c4c4;" width="24" height="24" viewBox="0 0 24 24"><path d="M5.59 7.41L10.18 12l-4.59 4.59L7 18l6-6-6-6zM16 6h2v12h-2z"/></svg>
<div class="abs" style="left:1404px;top:428px;width:36px;height:44px;border-radius:8px 0 0 8px;background:linear-gradient(135deg,#1976d2,#1565c0);box-shadow:0 2px 4px rgba(0,0,0,.25)"></div>
<svg class="abs" style="left:1412px;top:440px;fill:#fff" width="20" height="20" viewBox="0 0 20 20"><path fill-rule="evenodd" d="M2 3.5C2 2.7 2.7 2 3.5 2H17.3C18.1 2 18.8 2.7 18.8 3.5V14C18.8 14.8 18.1 15.5 17.3 15.5H5.3L2 18.7Z M9.8 4.6h1.3v5.2H9.8z M9.8 10.9h1.3v1.3H9.8z"/></svg>
</body></html>
